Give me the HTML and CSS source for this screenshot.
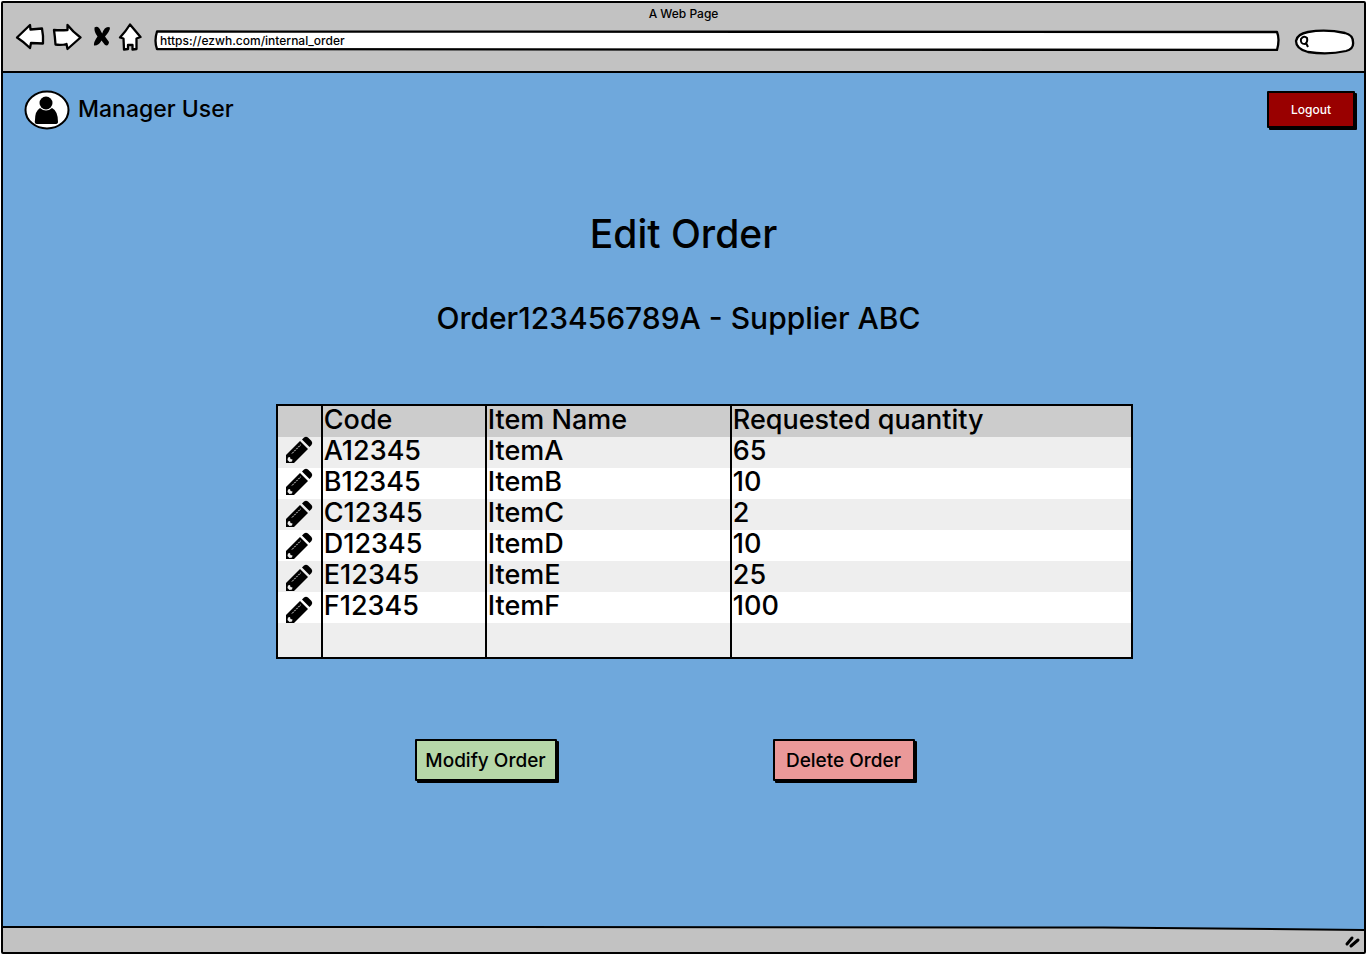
FILE: index.html
```html
<!DOCTYPE html>
<html lang="en">
<head>
<meta charset="utf-8">
<title>A Web Page</title>
<meta name="viewport" content="width=device-width, initial-scale=1">
<link rel="stylesheet" href="styles.css">
</head>
<body>
<svg class="defs" aria-hidden="true">
  <symbol id="pencil" viewBox="0 0 28 28">
    <path d="M1 27V19L15 5L23 13L9 27Z"/>
    <path d="M17 3.500L19 1.500Q21 0 23 1.500L26.500 5Q28 7 26.500 9L24.500 11Z"/>
    <path class="shine" d="M7 17.500L16 8.500"/>
    <path class="tip" d="M3 21.500L5 21L5.500 23L7.500 23.500L7 25.500L4.500 26L2.500 24Z"/>
  </symbol>
</svg>
<div class="window">
  <header class="chrome">
    <div class="chrome-title">A Web Page</div>
    <div class="toolbar">
      <button class="nav" type="button" aria-label="Back"><svg width="30" height="28" viewBox="15 23 30 28"><path class="outline" d="M17 37.500L30 25L30.500 29.500L42 28.500Q43.500 36 43 43.500L31 43L30 48Q24 42 17 37.500Z"/></svg></button>
      <button class="nav" type="button" aria-label="Forward"><svg width="30" height="28" viewBox="52 23 30 28"><path class="outline" d="M54 30Q60 30.500 67.500 30V25Q73 32 80.500 37.500L67.500 49L66.500 44Q61 45.500 55.500 44.500Q55 37 54 30Z"/></svg></button>
      <button class="nav" type="button" aria-label="Stop"><svg width="22" height="28" viewBox="89 23 22 28"><path d="M94.500 27.500Q98.500 25 101 31.500L102.200 33.500Q105 25.500 110 27.500Q110 31 105 36.500L109 42Q108.500 46.500 105 45L101.500 40.500Q98.500 46 94 45.500Q93.500 42 97.500 36.500Q94 32 94.500 27.500Z"/></svg></button>
      <button class="nav" type="button" aria-label="Home"><svg width="28" height="28" viewBox="118 23 28 28"><path class="outline" d="M130 24.500L140.500 37L136.500 38.500V49L132.500 49.500V45H128V49L124 49.500L123.500 38.500L120 37.500Q126 31 130 24.500Z"/></svg></button>
      <div class="field field-address">
        <svg class="frame" viewBox="0 0 1128 22" preserveAspectRatio="none" aria-hidden="true"><path class="outline" d="M4 2.500Q560 1 1124 3Q1127 10 1124 21Q560 19 4 20Q1 12 4 2.500Z"/></svg>
        <input class="address" type="text" aria-label="Address" value="https://ezwh.com/internal_order">
      </div>
      <div class="field field-search">
        <svg class="frame" viewBox="0 0 61 26" preserveAspectRatio="none" aria-hidden="true"><path class="outline" d="M14 3Q32 0 51 4Q59 6 59 13Q60 20 52 22Q34 26 14 23Q2 20 2 12Q3 5 14 3Z"/><path class="lens" d="M7 10Q10 6 13 9Q14 13 11 15Q6 15 7 10ZM12 14L14 18"/></svg>
        <input class="search" type="text" aria-label="Search">
      </div>
    </div>
  </header>

  <main class="page">
    <div class="userbar">
      <svg class="avatar" width="46" height="40" viewBox="0 0 46 40" aria-hidden="true"><ellipse class="avatar-ring" cx="23" cy="20" rx="21.500" ry="18.500"/><circle cx="22" cy="13" r="6.500"/><path d="M16 18Q22 23 28 18Q34 21 34 32Q34 34 31 34H13Q10 34 11 30Q11 21 16 18Z"/></svg>
      <span class="username">Manager User</span>
      <button class="btn btn-logout" type="button">Logout</button>
    </div>

    <h1 class="title">Edit Order</h1>
    <h2 class="subtitle">Order123456789A - Supplier ABC</h2>

    <div class="order">
      <table class="items">
        <colgroup><col class="col-edit"><col class="col-code"><col class="col-name"><col></colgroup>
        <thead>
          <tr><th></th><th>Code</th><th>Item Name</th><th>Requested quantity</th></tr>
        </thead>
        <tbody>
          <tr><td></td><td>A12345</td><td>ItemA</td><td>65</td></tr>
          <tr><td></td><td>B12345</td><td>ItemB</td><td>10</td></tr>
          <tr><td></td><td>C12345</td><td>ItemC</td><td>2</td></tr>
          <tr><td></td><td>D12345</td><td>ItemD</td><td>10</td></tr>
          <tr><td></td><td>E12345</td><td>ItemE</td><td>25</td></tr>
          <tr><td></td><td>F12345</td><td>ItemF</td><td>100</td></tr>
          <tr class="empty"><td></td><td></td><td></td><td></td></tr>
        </tbody>
      </table>
      <div class="edit-buttons">
        <button class="edit" type="button" aria-label="Edit ItemA"><svg width="28" height="28"><use href="#pencil"/></svg></button>
        <button class="edit" type="button" aria-label="Edit ItemB"><svg width="28" height="28"><use href="#pencil"/></svg></button>
        <button class="edit" type="button" aria-label="Edit ItemC"><svg width="28" height="28"><use href="#pencil"/></svg></button>
        <button class="edit" type="button" aria-label="Edit ItemD"><svg width="28" height="28"><use href="#pencil"/></svg></button>
        <button class="edit" type="button" aria-label="Edit ItemE"><svg width="28" height="28"><use href="#pencil"/></svg></button>
        <button class="edit" type="button" aria-label="Edit ItemF"><svg width="28" height="28"><use href="#pencil"/></svg></button>
      </div>
    </div>

    <div class="actions">
      <button class="btn btn-modify" type="button">Modify Order</button>
      <button class="btn btn-delete" type="button">Delete Order</button>
    </div>
  </main>

  <footer class="statusbar">
    <svg class="edge" viewBox="0 0 1361 6" preserveAspectRatio="none" aria-hidden="true"><path class="edge-fill" d="M0 0H1361V4Q1150 1 900 2Q450 0 0 1Z"/><path class="edge-line" d="M0 1Q250 2 450 1Q900 2 1100 1.500L1361 4"/></svg>
    <svg class="grip" width="18" height="18" viewBox="0 0 18 18" aria-hidden="true"><path class="grip-line" d="M3 12L8 6M7 14L14 8"/></svg>
  </footer>
</div>
</body>
</html>
```
FILE: styles.css
```css
* {
  box-sizing: border-box;
}

body {
  margin: 0;
  background: #fff;
  color: #000;
  font-family: Inter, "Liberation Sans", sans-serif;
  font-weight: 500;
}

button,
input {
  font: inherit;
  color: inherit;
}

.defs {
  display: none;
}

.window {
  display: flex;
  flex-direction: column;
  min-height: calc(100vh - 2px);
  margin: 1px;
  border: 2px solid #000;
  border-radius: 2px;
  background: #6fa8dc;
}

.chrome {
  padding-bottom: 20px;
  border-bottom: 2px solid #000;
  background: #c2c2c2;
}

.chrome-title {
  font-size: 12px;
  line-height: 22px;
  text-align: center;
}

.toolbar {
  display: flex;
  gap: 7px;
  height: 28px;
  margin-top: -2px;
  padding: 0 9px 0 12px;
}

.nav,
.edit {
  display: block;
  padding: 0;
  border: 0;
  background: none;
}

.nav {
  height: 28px;
}

.nav svg,
.edit svg {
  display: block;
}

.outline {
  fill: #fff;
  stroke: #000;
  stroke-width: 2.3;
  stroke-linejoin: round;
  vector-effect: non-scaling-stroke;
}

.field {
  display: grid;
  align-self: end;
}

.field > * {
  grid-area: 1 / 1;
  width: 100%;
  min-width: 0;
  height: 100%;
}

.field input {
  border: 0;
  background: none;
  outline: 0;
}

.field-address {
  flex: 1;
  height: 22px;
}

.field-search {
  width: 61px;
  height: 26px;
  margin: 0 0 -4px 6px;
}

.address {
  padding: 0 7px;
  font-size: 12px;
}

.search {
  padding: 0 8px 0 18px;
  font-size: 12px;
}

.lens {
  fill: none;
  stroke: #000;
  stroke-width: 2;
}

.page {
  flex: 1;
  padding-bottom: 48px;
}

.userbar {
  display: flex;
  align-items: flex-start;
  padding: 17px 9px 0 21px;
}

.avatar-ring {
  fill: #fff;
  stroke: #000;
  stroke-width: 2;
}

.username {
  flex: 1;
  padding-left: 8px;
  font-size: 23px;
  line-height: 38px;
}

.btn {
  border: 2px solid #000;
  border-radius: 1px;
  box-shadow: 2px 2px 0 #000;
  font-size: 19px;
}

.btn-logout {
  width: 88px;
  height: 37px;
  margin-top: 1px;
  padding: 0;
  background: #900;
  color: #fff;
  font-size: 12px;
}

.title,
.subtitle {
  margin: 0;
  font-weight: 500;
  text-align: center;
}

.title {
  padding-top: 80px;
  font-size: 39px;
  line-height: 48px;
}

.subtitle {
  padding: 40px 10px 0 0;
  font-size: 30px;
  line-height: 40px;
}

.order {
  position: relative;
  width: 63%;
  margin: 66px auto 0;
  left: 21px;
}

.items {
  width: 100%;
  border: 2px solid #000;
  border-collapse: collapse;
  table-layout: fixed;
  background: #fff;
  font-size: 27px;
  line-height: 28px;
}

.items th,
.items td {
  height: 31px;
  padding: 0 2px 3px 1px;
  border-left: 2px solid #000;
  font-weight: 500;
  text-align: left;
  vertical-align: top;
}

.items thead {
  background: #ccc;
}

.items tbody tr:nth-child(odd) {
  background: #eee;
}

.items .empty td {
  height: 35px;
}

.col-edit {
  width: 45px;
}

.col-code {
  width: 164px;
}

.col-name {
  width: 245px;
}

.edit-buttons {
  position: absolute;
  top: 32px;
  left: 9px;
  display: grid;
  gap: 4px;
}

.shine {
  stroke: #eee;
  stroke-width: 1;
  stroke-dasharray: 2 1;
}

.tip {
  fill: #eee;
}

.actions {
  display: flex;
  justify-content: center;
  gap: 216px;
  padding: 80px 38px 0 0;
}

.actions .btn {
  width: 142px;
  height: 42px;
  padding: 0;
}

.btn-modify {
  background: #b6d7a8;
}

.btn-delete {
  background: #ea9999;
}

.statusbar {
  display: flex;
  flex-direction: column;
  height: 26px;
  background: #c2c2c2;
}

.edge {
  display: block;
  width: 100%;
  height: 6px;
  overflow: visible;
}

.edge-fill {
  fill: #6fa8dc;
}

.edge-line {
  fill: none;
  stroke: #000;
  stroke-width: 2;
  vector-effect: non-scaling-stroke;
}

.grip {
  align-self: flex-end;
  margin-right: 2px;
}

.grip-line {
  fill: none;
  stroke: #000;
  stroke-width: 3;
  stroke-linecap: round;
}
```
